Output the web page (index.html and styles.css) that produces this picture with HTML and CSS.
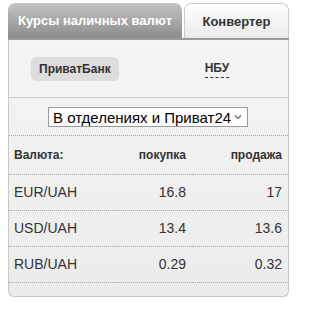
FILE: index.html
```html
<!DOCTYPE html>
<html lang="ru">
<head>
    <meta charset="UTF-8">
    <title>Курсы валют</title>
    <link rel="stylesheet" href="styles.css">
</head>
<body>
    <div class="widget">
        <div class="tabs">
            <div class="tab active">Курсы наличных валют</div>
            <div class="tab">Конвертер</div>
        </div>
        <div class="panel">
            <div class="sources">
                <span class="source selected">ПриватБанк</span>
                <span class="source dashed">НБУ</span>
            </div>
            <div class="select-row">
                <select class="place">
                    <option>В отделениях и Приват24</option>
                </select>
            </div>
            <table class="rates">
                <tr class="head">
                    <td>Валюта:</td>
                    <td>покупка</td>
                    <td>продажа</td>
                </tr>
                <tr>
                    <td>EUR/UAH</td>
                    <td>16.8</td>
                    <td>17</td>
                </tr>
                <tr>
                    <td>USD/UAH</td>
                    <td>13.4</td>
                    <td>13.6</td>
                </tr>
                <tr>
                    <td>RUB/UAH</td>
                    <td>0.29</td>
                    <td>0.32</td>
                </tr>
            </table>
        </div>
    </div>
</body>
</html>
```

FILE: styles.css
```css
* {
    margin: 0;
    padding: 0;
    box-sizing: border-box;
}
body {
    font-family: "Liberation Sans", Arial, sans-serif;
    color: #333;
    background: #fff;
    padding: 3px 8px;
}
.widget {
    width: 281px;
}
.tabs {
    display: flex;
    align-items: flex-end;
    gap: 2px;
    border-bottom: 2px solid #999;
}
.tab {
    height: 35px;
    line-height: 35px;
    padding: 0 10px;
    font-size: 13px;
    font-weight: bold;
    border: 1px solid #ccc;
    border-bottom: none;
    border-radius: 7px 7px 0 0;
    background: linear-gradient(#fff, #e9e9e9);
    color: #333;
    flex: 1;
    text-align: center;
}
.tab.active {
    flex: none;
    width: 174px;
    height: 35px;
    border: none;
    background: linear-gradient(#c4c4c4, #8c8c8c);
    color: #fff;
}
.panel {
    border: 1px solid #c8c8c8;
    border-top: none;
    border-radius: 0 0 6px 6px;
    background: linear-gradient(#f4f4f4, #ececec);
    height: 257px;
}
.sources {
    display: flex;
    align-items: center;
    height: 58px;
    border-bottom: 1px solid #ccc;
    padding-left: 22px;
}
.source {
    font-size: 12px;
    font-weight: bold;
    padding: 5px 8px;
}
.source.selected {
    background: #ddd;
    border-radius: 5px;
}
.source.dashed {
    padding: 2px 0;
    border-bottom: 1px dashed #333;
    margin-left: 86px;
}
.select-row {
    padding: 9px 0 8px 39px;
    border-bottom: 1px dotted #aaa;
}
.place {
    appearance: none;
    -webkit-appearance: none;
    font-family: "Liberation Sans", Arial, sans-serif;
    font-size: 15px;
    width: 200px;
    height: 20px;
    padding: 0 14px 0 4px;
    border: 1px solid #999;
    border-radius: 0;
    color: #000;
    background: #fff url("data:image/svg+xml,%3Csvg xmlns='http://www.w3.org/2000/svg' width='8' height='6'%3E%3Cpath d='M1 1.5 L4 4.5 L7 1.5' fill='none' stroke='%23777' stroke-width='1.5'/%3E%3C/svg%3E") no-repeat right 5px center;
}
.rates {
    width: 100%;
    border-collapse: collapse;
}
.rates td {
    height: 36px;
    font-size: 14px;
    border-bottom: 1px dotted #aaa;
    text-align: right;
    padding-right: 6px;
}
.rates td:first-child {
    text-align: left;
    padding-left: 5px;
}
.rates td:nth-child(3) {
    width: 96px;
}
.rates .head td {
    font-size: 12px;
    font-weight: bold;
    height: 38px;
}
```
